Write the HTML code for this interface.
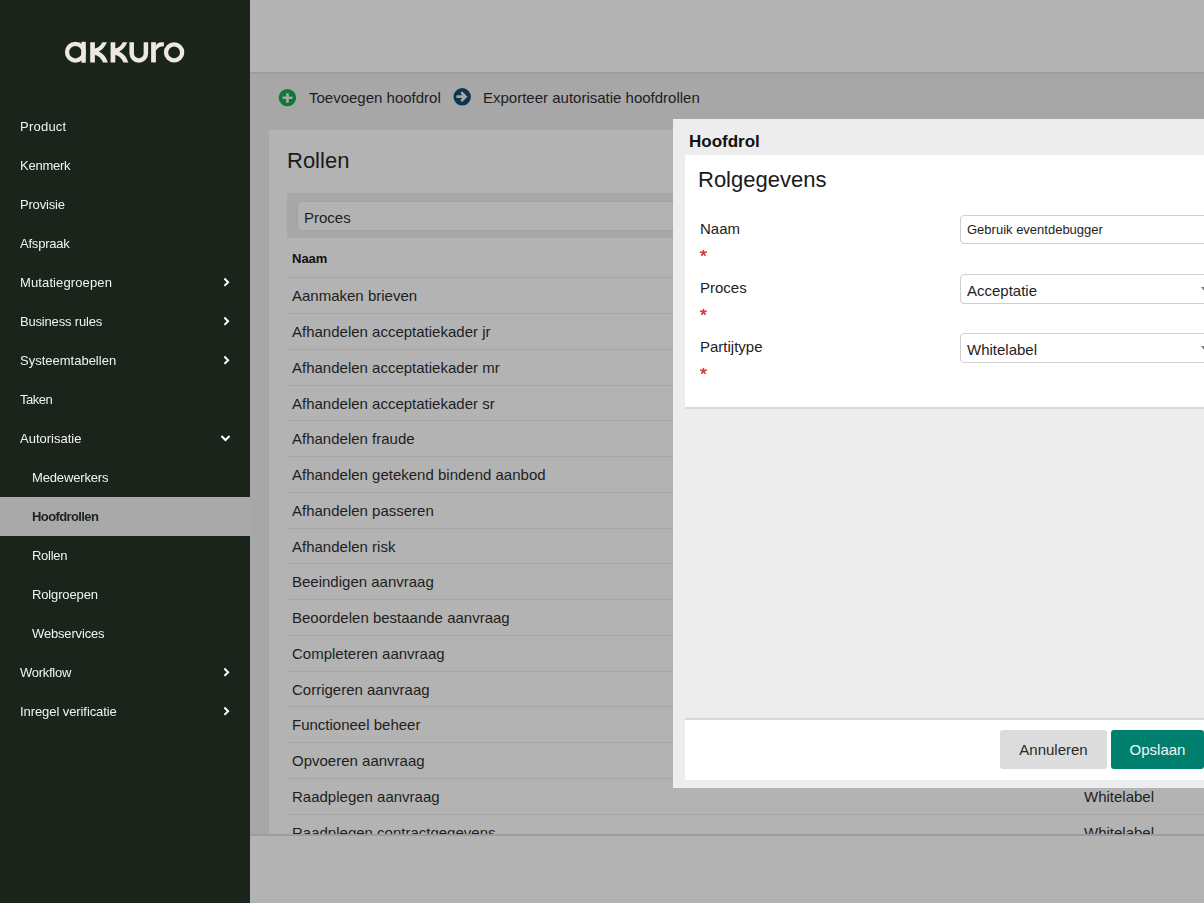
<!DOCTYPE html>
<html><head><meta charset="utf-8">
<style>
*{box-sizing:border-box;margin:0;padding:0}
html,body{width:1204px;height:903px;overflow:hidden;background:#a7a7a7;font-family:"Liberation Sans",sans-serif;color:#222}
.abs{position:absolute}
#side{left:0;top:0;width:250px;height:903px;background:#1b241a;will-change:transform}
.nav{position:absolute;left:0;width:250px;height:39px;color:#f2f2f2;font-size:13px;line-height:39px;padding-left:20px;white-space:nowrap}
.nav.sub{padding-left:32px}
.nav.act{background:#a9a9a9;color:#1b231b;font-weight:bold;letter-spacing:-0.6px}
.chev{position:absolute;left:221px;top:14px}
#hdr{left:250px;top:0;width:954px;height:72px;background:#b3b3b3}
#hdrb{left:250px;top:72px;width:954px;height:2px;background:#9d9d9d}
#tb{left:250px;top:74px;width:954px;height:56px}
.tbt{position:absolute;top:88px;font-size:15px;line-height:20px;color:#1e1e1e;white-space:nowrap}
#panel{left:269px;top:130px;width:935px;height:704px;background:#b3b3b3;overflow:hidden}
#foot{left:250px;top:834px;width:954px;height:69px;background:#b3b3b3;border-top:2px solid #9d9d9d}
.row{position:absolute;left:18px;width:917px;height:36px;border-top:1px solid #a7a7a7}
.row span{position:absolute;left:5px;top:9px;font-size:15px;line-height:18px;color:#1e1e1e;white-space:nowrap}
.row em{font-style:normal;position:absolute;left:797px;top:9px;font-size:15px;line-height:18px;color:#1e1e1e;white-space:nowrap}
.lbl{position:absolute;left:15px;font-size:15px;line-height:18px;color:#222;white-space:nowrap}
.req{position:absolute;left:15px;font-size:15px;line-height:18px;color:#d43f3a;white-space:nowrap}
.inp{position:absolute;left:275px;width:300px;background:#fff;border:1px solid #cfcfcf;border-radius:4px}
.inp span{position:absolute;left:6px;font-size:15px;line-height:18px;color:#1e1e1e;white-space:nowrap}
.caret{position:absolute;left:240px;top:12px;width:0;height:0;border-left:4px solid transparent;border-right:4px solid transparent;border-top:5px solid #777}
.btn{border-radius:3px;font-size:15px;line-height:39px;text-align:center}
#modal{left:673px;top:119px;width:560px;height:669px;background:#ededed}
</style></head><body>
<div id="side" class="abs">
  <svg class="abs" style="left:0;top:0" width="250" height="80" viewBox="0 0 250 80">
    <g fill="#ede8e3">
      <!-- a -->
      <circle cx="75.4" cy="52.2" r="8.35" fill="none" stroke="#ede8e3" stroke-width="4.3"/>
      <rect x="81.4" y="41.8" width="4.4" height="20.9"/>
      <!-- k -->
      <path d="M90.2 42.2H94.9V48.5Q99.5 47.5 102.4 42.2H106.9Q104 49 98.9 51.4Q105 54 107.9 62.4H103Q100 56 94.9 55V62.4H90.2Z"/>
      <path d="M110.6 42.2H115.3V48.5Q119.9 47.5 122.8 42.2H127.3Q124.4 49 119.3 51.4Q125.4 54 128.3 62.4H123.4Q120.4 56 115.3 55V62.4H110.6Z"/>
      <!-- u -->
      <path d="M131.7 42.2V53.4A7.1 7.1 0 0 0 145.9 53.4V42.2" fill="none" stroke="#ede8e3" stroke-width="4.5"/>
      <!-- r -->
      <rect x="151.1" y="42.2" width="4.8" height="20.2"/>
      <path d="M155.9 45.5Q157.8 42.2 161.5 42.2H163.9V46.2Q158.6 46.2 155.9 50.5Z"/>
      <!-- o -->
      <circle cx="174.1" cy="52.4" r="8.05" fill="none" stroke="#ede8e3" stroke-width="4.3"/>
    </g>
  </svg>
  <div class="nav" style="top:107px;letter-spacing:0.23px">Product</div>
  <div class="nav" style="top:146px;letter-spacing:-0.25px">Kenmerk</div>
  <div class="nav" style="top:185px;letter-spacing:-0.19px">Provisie</div>
  <div class="nav" style="top:224px;letter-spacing:-0.21px">Afspraak</div>
  <div class="nav" style="top:263px;letter-spacing:0.12px">Mutatiegroepen<svg class="chev" width="10" height="10" viewBox="0 0 10 10"><path d="M3.4 1.5L7.1 5.2L3.4 8.9" fill="none" stroke="#fff" stroke-width="2"/></svg></div>
  <div class="nav" style="top:302px;letter-spacing:-0.18px">Business rules<svg class="chev" width="10" height="10" viewBox="0 0 10 10"><path d="M3.4 1.5L7.1 5.2L3.4 8.9" fill="none" stroke="#fff" stroke-width="2"/></svg></div>
  <div class="nav" style="top:341px">Systeemtabellen<svg class="chev" width="10" height="10" viewBox="0 0 10 10"><path d="M3.4 1.5L7.1 5.2L3.4 8.9" fill="none" stroke="#fff" stroke-width="2"/></svg></div>
  <div class="nav" style="top:380px;letter-spacing:-0.47px">Taken</div>
  <div class="nav" style="top:419px">Autorisatie<svg class="chev" width="10" height="10" viewBox="0 0 10 10"><path d="M0.5 3L4.5 7L8.5 3" fill="none" stroke="#fff" stroke-width="2"/></svg></div>
  <div class="nav sub" style="top:458px;letter-spacing:-0.15px">Medewerkers</div>
  <div class="nav sub act" style="top:497px">Hoofdrollen</div>
  <div class="nav sub" style="top:536px;letter-spacing:-0.28px">Rollen</div>
  <div class="nav sub" style="top:575px;letter-spacing:-0.14px">Rolgroepen</div>
  <div class="nav sub" style="top:614px;letter-spacing:-0.16px">Webservices</div>
  <div class="nav" style="top:653px;letter-spacing:-0.27px">Workflow<svg class="chev" width="10" height="10" viewBox="0 0 10 10"><path d="M3.4 1.5L7.1 5.2L3.4 8.9" fill="none" stroke="#fff" stroke-width="2"/></svg></div>
  <div class="nav" style="top:692px;letter-spacing:-0.08px">Inregel verificatie<svg class="chev" width="10" height="10" viewBox="0 0 10 10"><path d="M3.4 1.5L7.1 5.2L3.4 8.9" fill="none" stroke="#fff" stroke-width="2"/></svg></div>
</div>

<div id="hdr" class="abs"></div>
<div id="hdrb" class="abs"></div>

<!-- toolbar -->
<svg class="abs" style="left:278px;top:88px" width="20" height="20" viewBox="0 0 20 20">
  <path fill="#0b7a35" fill-rule="evenodd" d="M9.4 0.9A8.7 8.7 0 1 1 9.4 18.3A8.7 8.7 0 1 1 9.4 0.9ZM8.1 5.2V8.6H4.5V11H8.1V14.8H10.8V11H14.5V8.6H10.8V5.2Z"/>
</svg>
<div class="tbt" style="left:309px">Toevoegen hoofdrol</div>
<svg class="abs" style="left:453px;top:88px" width="20" height="20" viewBox="0 0 20 20">
  <path fill="#0d3550" fill-rule="evenodd" d="M9.2 0.1A8.7 8.7 0 1 1 9.2 17.5A8.7 8.7 0 1 1 9.2 0.1ZM3.4 7.3V10.1H9.2L7.3 12.3L9.1 14.1L14.5 8.7L9.1 3.3L7.3 5.1L9.2 7.3Z"/>
</svg>
<div class="tbt" style="left:483px">Exporteer autorisatie hoofdrollen</div>

<div id="panel" class="abs">
  <div class="abs" style="left:18px;top:18px;font-size:22px;line-height:26px;color:#1a1a1a">Rollen</div>
  <div class="abs" style="left:18px;top:63px;width:917px;height:45px;background:#a8a8a8"></div>
  <div class="abs" style="left:28px;top:71px;width:900px;height:30px;background:#b3b3b3;border:1px solid #a0a0a0;border-radius:5px"></div>
  <div class="abs" style="left:35px;top:79px;font-size:15px;line-height:18px;color:#1e1e1e">Proces</div>
  <div class="abs" style="left:23px;top:121px;font-size:13px;font-weight:bold;line-height:16px;color:#111">Naam</div>
  <div class="row" style="top:147px"><span>Aanmaken brieven</span></div>
  <div class="row" style="top:183px"><span>Afhandelen acceptatiekader jr</span></div>
  <div class="row" style="top:219px"><span>Afhandelen acceptatiekader mr</span></div>
  <div class="row" style="top:255px"><span>Afhandelen acceptatiekader sr</span></div>
  <div class="row" style="top:290px"><span>Afhandelen fraude</span></div>
  <div class="row" style="top:326px"><span>Afhandelen getekend bindend aanbod</span></div>
  <div class="row" style="top:362px"><span>Afhandelen passeren</span></div>
  <div class="row" style="top:398px"><span>Afhandelen risk</span></div>
  <div class="row" style="top:433px"><span>Beeindigen aanvraag</span></div>
  <div class="row" style="top:469px"><span>Beoordelen bestaande aanvraag</span></div>
  <div class="row" style="top:505px"><span>Completeren aanvraag</span></div>
  <div class="row" style="top:541px"><span>Corrigeren aanvraag</span></div>
  <div class="row" style="top:576px"><span>Functioneel beheer</span></div>
  <div class="row" style="top:612px"><span>Opvoeren aanvraag</span></div>
  <div class="row" style="top:648px"><span>Raadplegen aanvraag</span><em>Whitelabel</em></div>
  <div class="row" style="top:684px"><span>Raadplegen contractgegevens</span><em>Whitelabel</em></div>
</div>
<div id="foot" class="abs"></div>

<div id="modal" class="abs">
  <div class="abs" style="left:16px;top:13px;font-size:17px;font-weight:bold;line-height:20px;color:#111">Hoofdrol</div>
  <div class="abs" style="left:12px;top:36px;width:560px;height:254px;background:#fff;border-bottom:2px solid #d9d9d9">
    <div class="abs" style="left:13px;top:12px;font-size:22px;line-height:26px;color:#1a1a1a">Rolgegevens</div>
    <div class="lbl" style="top:65px">Naam</div><svg class="req" style="top:93px;left:14px" width="10" height="10" viewBox="0 0 10 10"><path d="M4.4 5V2.6M4.4 5L1.6 4.1M4.4 5L7.2 4.1M4.4 5L2.7 7.3M4.4 5L6.1 7.3" stroke="#d8383e" stroke-width="1.6" stroke-linecap="round" fill="none"/></svg>
    <div class="lbl" style="top:124px">Proces</div><svg class="req" style="top:152px;left:14px" width="10" height="10" viewBox="0 0 10 10"><path d="M4.4 5V2.6M4.4 5L1.6 4.1M4.4 5L7.2 4.1M4.4 5L2.7 7.3M4.4 5L6.1 7.3" stroke="#d8383e" stroke-width="1.6" stroke-linecap="round" fill="none"/></svg>
    <div class="lbl" style="top:183px">Partijtype</div><svg class="req" style="top:211px;left:14px" width="10" height="10" viewBox="0 0 10 10"><path d="M4.4 5V2.6M4.4 5L1.6 4.1M4.4 5L7.2 4.1M4.4 5L2.7 7.3M4.4 5L6.1 7.3" stroke="#d8383e" stroke-width="1.6" stroke-linecap="round" fill="none"/></svg>
    <div class="inp" style="top:60px;height:29px"><span style="font-size:13px;top:5px">Gebruik eventdebugger</span></div>
    <div class="inp" style="top:119px;height:30px"><span style="top:7px">Acceptatie</span><i class="caret"></i></div>
    <div class="inp" style="top:178px;height:30px"><span style="top:7px">Whitelabel</span><i class="caret"></i></div>
  </div>
  <div class="abs" style="left:12px;top:599px;width:560px;height:62px;background:#fff;border-top:2px solid #d9d9d9">
    <div class="abs btn" style="left:315px;top:10px;width:107px;height:39px;background:#dcdcdc;color:#2a2a2a">Annuleren</div>
    <div class="abs btn" style="left:426px;top:10px;width:93px;height:39px;background:#007f6f;color:#f4f4f4">Opslaan</div>
  </div>
</div>
</body></html>
